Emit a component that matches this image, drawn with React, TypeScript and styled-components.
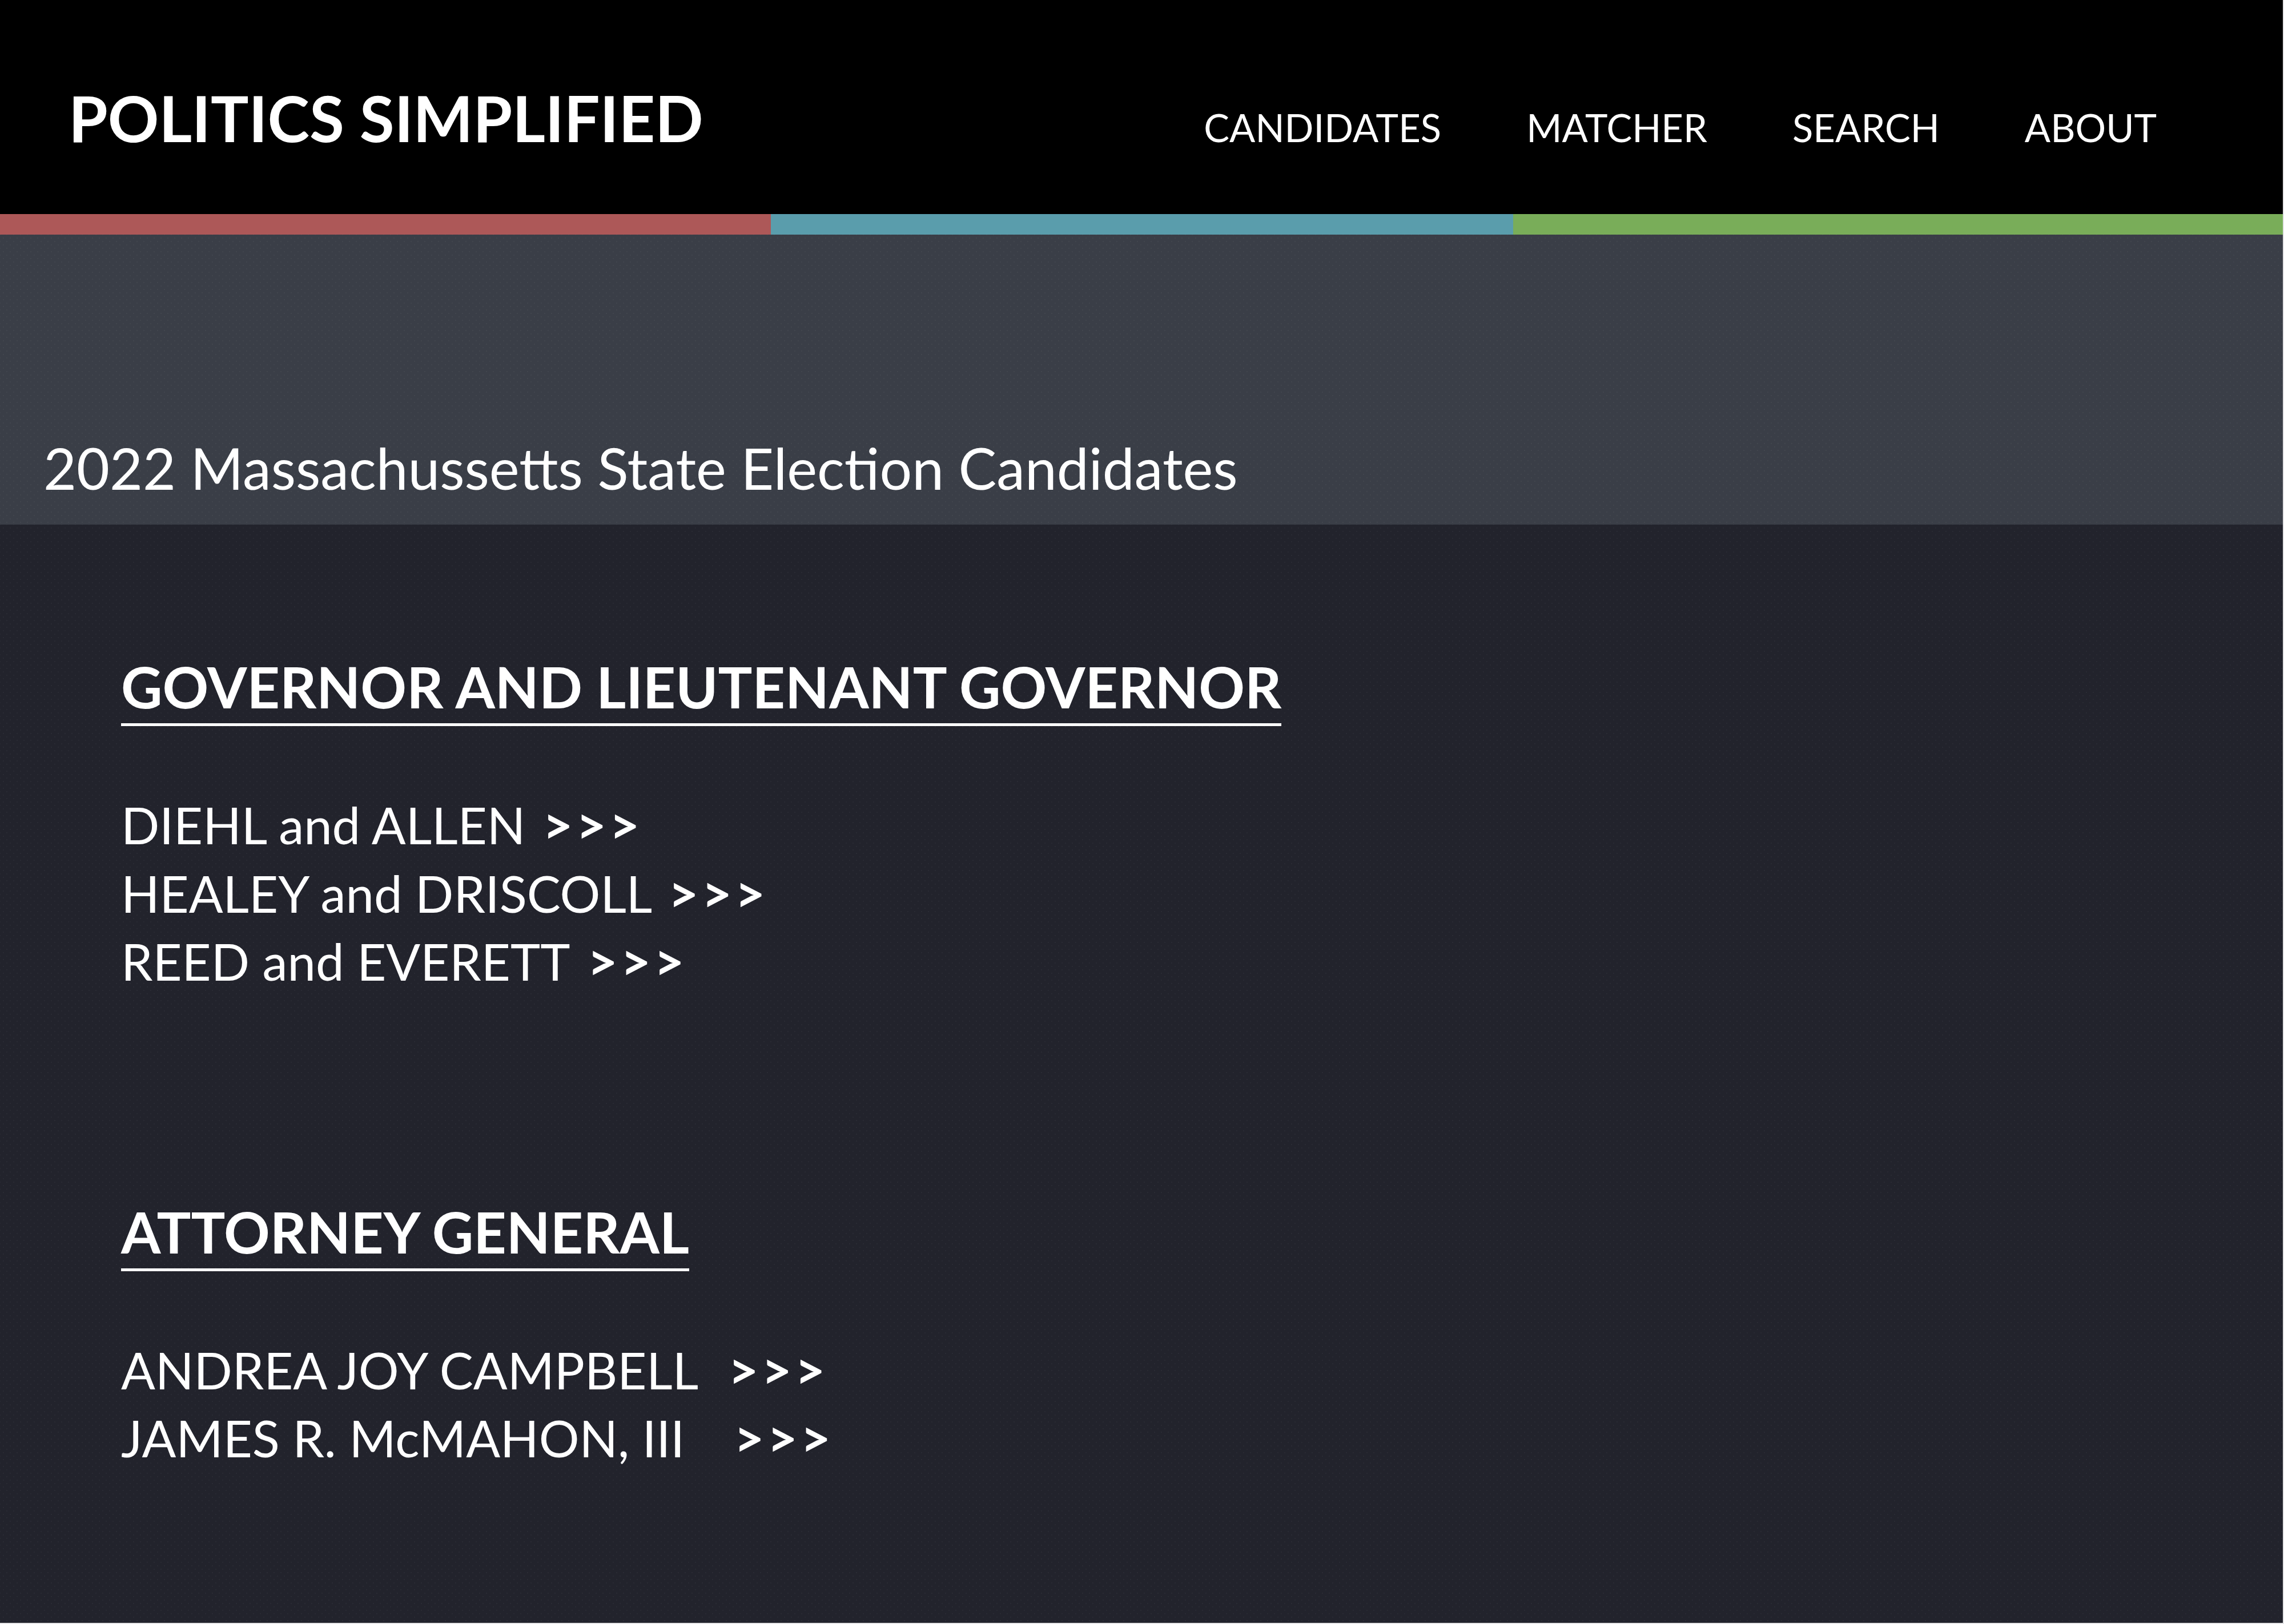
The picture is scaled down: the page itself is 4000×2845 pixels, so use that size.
import React from "react";
import styled, { createGlobalStyle } from "styled-components";

const GlobalStyle = createGlobalStyle`
  html, body {
    margin: 0;
    padding: 0;
    background: #e6e6e8;
  }
  body {
    font-family: Lato, "Open Sans", sans-serif;
  }
`;

const Page = styled.div`
  width: 3998px;
  height: 2843px;
  display: flex;
  flex-direction: column;
  background: #22232c;
  overflow: hidden;
`;

const Header = styled.header`
  height: 375px;
  box-sizing: border-box;
  background: #000;
  display: flex;
  align-items: baseline;
  justify-content: space-between;
  padding: 151px 221px 0 120px;
  color: #fff;
`;

const Brand = styled.div`
  font-family: Lato, sans-serif;
  font-weight: 700;
  font-size: 111px;
  line-height: 1;
`;

const Nav = styled.nav`
  display: flex;
  align-items: baseline;
  gap: 149px;
`;

const NavLink = styled.a`
  font-family: Lato, sans-serif;
  font-weight: 400;
  font-size: 67px;
  line-height: 1;
  color: #fff;
  text-decoration: none;
`;

const Stripe = styled.div`
  display: flex;
  height: 36px;
`;

const StripeSegment = styled.div<{ $color: string; $width: number }>`
  width: ${(p) => p.$width}px;
  flex: ${(p) => (p.$width ? "none" : "1")};
  background: ${(p) => p.$color};
`;

const Band = styled.section`
  height: 508px;
  box-sizing: border-box;
  background-color: #3a3e47;
  background-image: radial-gradient(rgba(255, 255, 255, 0.035) 1px, transparent 1.6px),
    radial-gradient(rgba(255, 255, 255, 0.035) 1px, transparent 1.6px);
  background-size: 12px 12px;
  background-position: 0 0, 6px 6px;
  display: flex;
  align-items: flex-end;
  padding: 0 0 50px 76px;
`;

const BandTitle = styled.h1`
  margin: 0;
  font-family: Lato, sans-serif;
  font-weight: 400;
  font-size: 100px;
  line-height: 1;
  color: #fff;
`;

const Main = styled.main`
  flex: 1;
  background-color: #22232c;
  background-image: radial-gradient(rgba(255, 255, 255, 0.03) 1px, transparent 1.6px),
    radial-gradient(rgba(255, 255, 255, 0.03) 1px, transparent 1.6px);
  background-size: 12px 12px;
  background-position: 0 0, 6px 6px;
  padding: 233px 0 0 212px;
  display: flex;
  flex-direction: column;
  gap: 362px;
  color: #fff;
`;

const Race = styled.section`
  display: flex;
  flex-direction: column;
  align-items: flex-start;
`;

const RaceTitle = styled.h2`
  margin: 0;
  font-family: Lato, sans-serif;
  font-weight: 700;
  font-size: 100px;
  line-height: 1;
  padding-bottom: 15px;
  border-bottom: 5px solid #fff;
`;

const CandidateList = styled.ul`
  list-style: none;
  margin: 114px 0 0 0;
  padding: 0;
`;

const Candidate = styled.li`
  font-family: Lato, sans-serif;
  font-weight: 400;
  font-size: 88.5px;
  line-height: 119.5px;
  white-space: pre;
`;

const Arrows = styled.span<{ $gap: number }>`
  font-weight: 700;
  font-size: 92px;
  line-height: 1;
  letter-spacing: 5px;
  margin-left: ${(p) => p.$gap}px;
`;

const races = [
  {
    title: "GOVERNOR AND LIEUTENANT GOVERNOR",
    candidates: [
      { name: "DIEHL and ALLEN", gap: 30 },
      { name: "HEALEY and DRISCOLL", gap: 28 },
      { name: "REED and EVERETT", gap: 30 },
    ],
  },
  {
    title: "ATTORNEY GENERAL",
    candidates: [
      { name: "ANDREA JOY CAMPBELL", gap: 52 },
      { name: "JAMES R. McMAHON, III", gap: 86 },
    ],
  },
];

export default function App() {
  return (
    <>
      <GlobalStyle />
      <Page>
        <Header>
          <Brand>POLITICS SIMPLIFIED</Brand>
          <Nav>
            <NavLink href="#">CANDIDATES</NavLink>
            <NavLink href="#">MATCHER</NavLink>
            <NavLink href="#">SEARCH</NavLink>
            <NavLink href="#">ABOUT</NavLink>
          </Nav>
        </Header>
        <Stripe>
          <StripeSegment $color="#ad5858" $width={1350} />
          <StripeSegment $color="#5a9dac" $width={1300} />
          <StripeSegment $color="#79ad59" $width={0} />
        </Stripe>
        <Band>
          <BandTitle>2022 Massachussetts State Election Candidates</BandTitle>
        </Band>
        <Main>
          {races.map((race) => (
            <Race key={race.title}>
              <RaceTitle>{race.title}</RaceTitle>
              <CandidateList>
                {race.candidates.map((c) => (
                  <Candidate key={c.name}>
                    {c.name}
                    <Arrows $gap={c.gap}>&gt;&gt;&gt;</Arrows>
                  </Candidate>
                ))}
              </CandidateList>
            </Race>
          ))}
        </Main>
      </Page>
    </>
  );
}
